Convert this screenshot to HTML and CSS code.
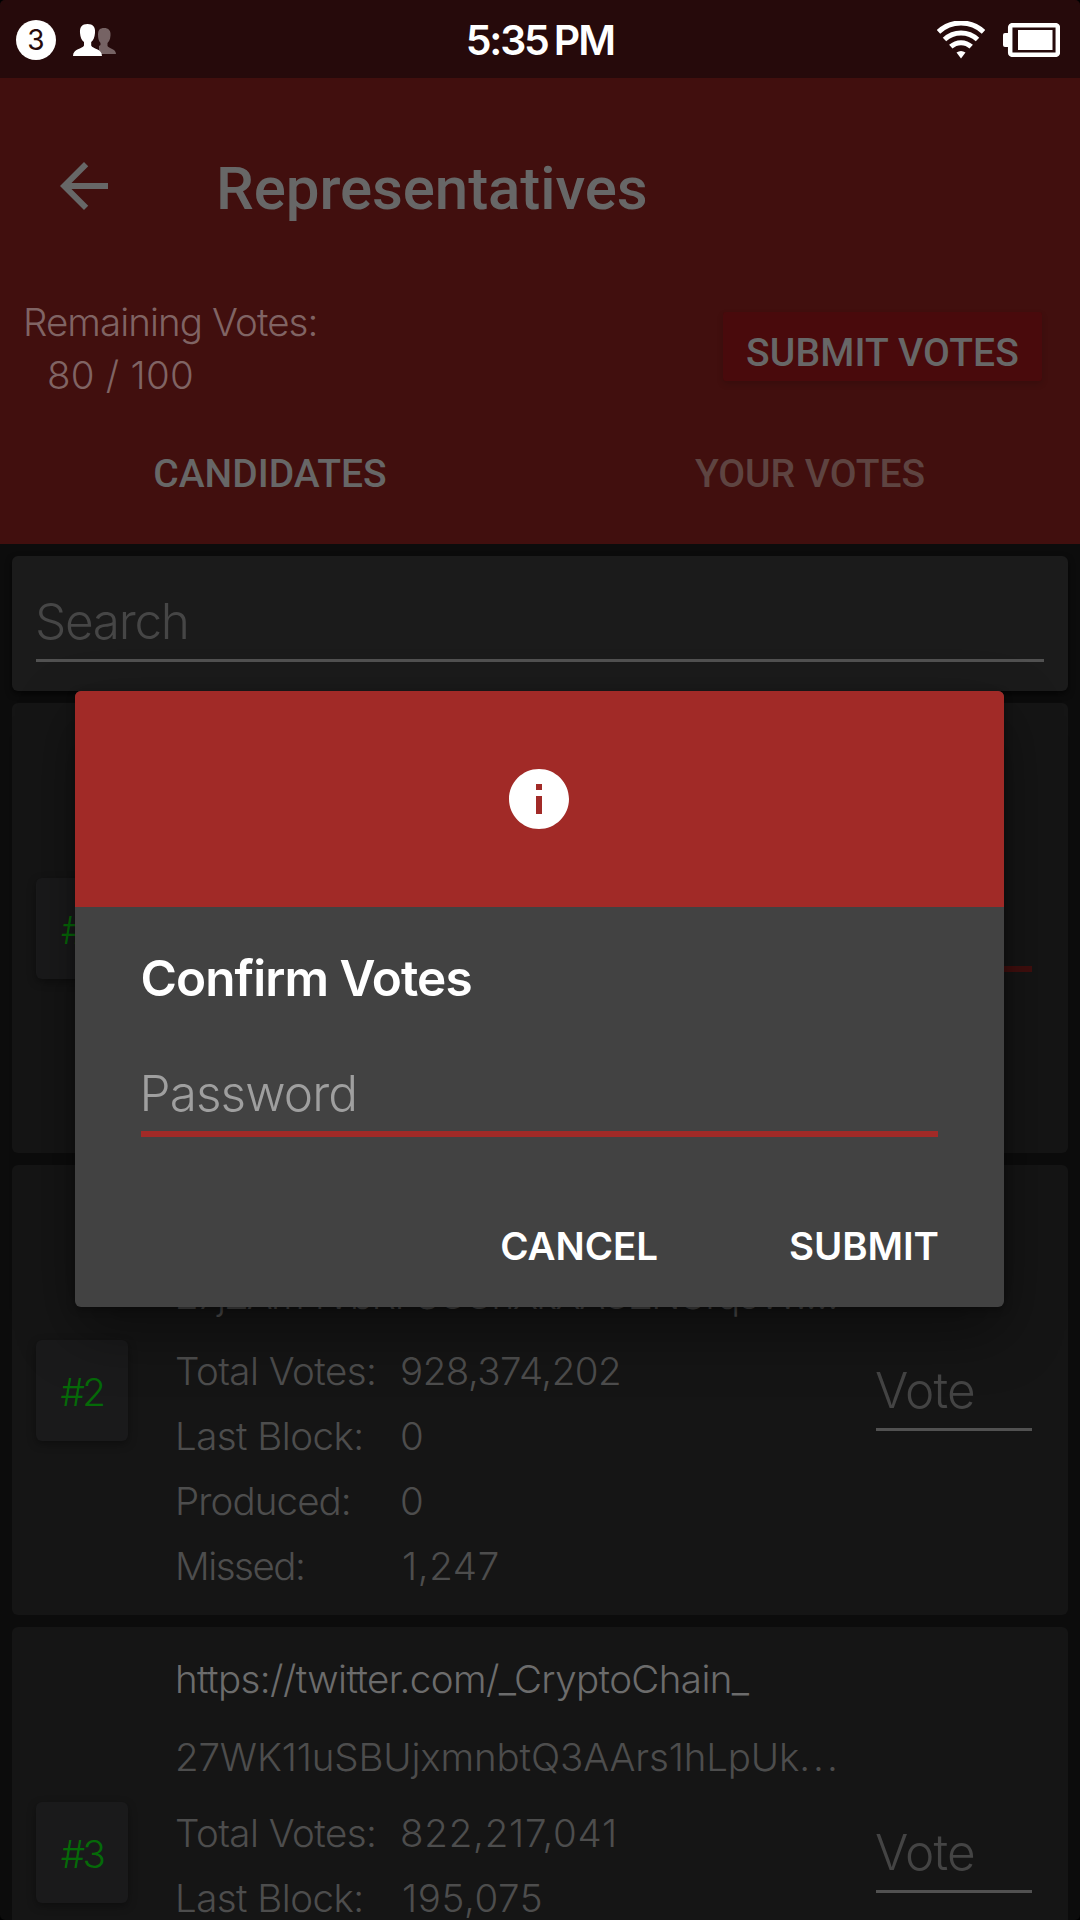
FILE: index.html
```html
<!DOCTYPE html>
<html lang="en">
<head>
<meta charset="utf-8">
<title>Representatives</title>
<link rel="stylesheet" href="styles.css">
</head>
<body>
<div class="screen">
  <div class="status">
    <div class="status-side">
      <span class="count">3</span>
      <svg class="people" width="44" height="32" viewBox="0 0 44 32">
        <path fill="#766364" d="M31 4c4.500 0 7 2.500 6.500 7.500C37.200 15.500 36 17.500 34.500 19v3c1 2.500 8.500 2.500 8.500 8H26V22l1.500-1v-2C25.500 17 25 14 25 10.500 25 6 27 4 31 4z"/>
        <path fill="#fff" d="M14.500 0c5.500 0 8 3 7.500 9-.4 4.500-1.500 7-3.800 9v3.500C19.500 25 29 24.500 29 32H0c0-7.500 9.500-7 11-10.500V18C8.500 16 7.400 13.500 7 9c-.5-6 2-9 7.500-9z"/>
      </svg>
    </div>
    <div class="clock"><span class="clock-time">5:35</span><span>PM</span></div>
    <div class="status-side status-right">
      <svg class="wifi" width="48" height="38" viewBox="0 0 48 38" fill="none" stroke="#fff" stroke-width="5">
        <path d="M1.500 10.800A33 33 0 0 1 46.500 10.800"/>
        <path d="M7.500 18.500A24 24 0 0 1 40.500 18.500"/>
        <path d="M13.800 25.700A15 15 0 0 1 34.200 25.700"/>
        <path d="M19.500 31.500Q24 28.500 28.500 31.500L24 37.500z" fill="#fff" stroke="none"/>
      </svg>
      <svg class="battery" width="57" height="34" viewBox="0 0 57 34">
        <rect x="0" y="10" width="8" height="14" rx="2" fill="#fff"/>
        <rect x="7.200" y="2.200" width="47.600" height="29.600" rx="2" fill="none" stroke="#fff" stroke-width="4.500"/>
        <rect x="15" y="7" width="34.500" height="20" fill="#fff"/>
      </svg>
    </div>
  </div>

  <header class="header">
    <div class="toolbar">
      <svg width="72" height="72" viewBox="0 0 24 24"><path fill="#676767" d="M20 11H7.830l5.590-5.590L12 4l-8 8 8 8 1.410-1.410L7.830 13H20v-2z"/></svg>
      <h1 class="title">Representatives</h1>
    </div>
    <div class="summary">
      <div class="remaining">
        <div class="remaining-label">Remaining Votes:</div>
        <div class="remaining-value">80 / 100</div>
      </div>
      <div class="submit-votes">SUBMIT VOTES</div>
    </div>
    <nav class="tabs">
      <div class="tab tab-active">CANDIDATES</div>
      <div class="tab">YOUR VOTES</div>
    </nav>
  </header>

  <main class="list">
    <div class="search"><div class="search-field">Search</div></div>

    <article class="card">
      <div class="rank rank-first">#1</div>
      <div class="info"></div>
      <div class="vote vote-focused"></div>
    </article>

    <article class="card">
      <div class="rank">#2</div>
      <div class="info">
        <div class="url"></div>
        <div class="address address-second">27jZAm4VbRFSCGhXkXACZNUrqJvw…</div>
        <div class="stats">
          <div>Total Votes:</div><div class="n-tight">928,374,202</div>
          <div>Last Block:</div><div>0</div>
          <div class="produced">Produced:</div><div>0</div>
          <div class="missed">Missed:</div><div class="n-one">1,247</div>
        </div>
      </div>
      <div class="vote">Vote</div>
    </article>

    <article class="card">
      <div class="rank">#3</div>
      <div class="info">
        <div class="url">https://twitter.com/_CryptoChain_</div>
        <div class="address">27WK11uSBUjxmnbtQ3AArs1hLpUk<span class="more">...</span></div>
        <div class="stats">
          <div>Total Votes:</div><div class="n-wide">822,217,041</div>
          <div>Last Block:</div><div class="n-one">195,075</div>
        </div>
      </div>
      <div class="vote">Vote</div>
    </article>
  </main>

  <section class="dialog">
    <div class="dialog-top">
      <svg width="72" height="72" viewBox="0 0 24 24"><path fill="#fff" d="M12 2C6.480 2 2 6.480 2 12s4.480 10 10 10 10-4.480 10-10S17.520 2 12 2zm1 15h-2v-6h2v6zm0-8h-2V7h2v2z"/></svg>
    </div>
    <div class="dialog-body">
      <h2 class="dialog-title">Confirm Votes</h2>
      <div class="password">Password</div>
      <div class="actions"><span>CANCEL</span><span>SUBMIT</span></div>
    </div>
  </section>
</div>
</body>
</html>
```
FILE: styles.css
```css
* { box-sizing: border-box; }

html { background: #000; }

body {
  margin: 0;
  font-family: Inter, "Liberation Sans", sans-serif;
  font-weight: 300;
  font-size: 38.5px;
  font-feature-settings: "calt" 0;
}

.screen {
  position: relative;
  width: 1080px;
  height: 1920px;
  overflow: hidden;
  border-radius: 5px;
  background: #0c0c0c;
}

svg { display: block; }

/* Status bar */
.status {
  display: grid;
  grid-template-columns: 1fr auto 1fr;
  height: 78px;
  background: #260a0b;
  color: #fff;
}
.status-side {
  display: flex;
  align-items: center;
  padding-left: 16px;
}
.status-right {
  justify-content: flex-end;
  padding: 0 20px 0 0;
}
.count {
  width: 40px;
  height: 40px;
  border-radius: 50%;
  background: #fff;
  color: #260a0b;
  font-size: 28px;
  font-weight: 400;
  line-height: 40px;
  text-align: center;
}
.people { margin-left: 17px; }
.wifi { margin-right: 18px; }
.clock {
  display: flex;
  gap: 6px;
  font-size: 41px;
  font-weight: 600;
  line-height: 80px;
  letter-spacing: -1.8px;
}
.clock-time { letter-spacing: -2.2px; }

/* App bar */
.header {
  height: 466px;
  padding-top: 24px;
  background: #410f0e;
  color: #676767;
  font-family: Roboto, sans-serif;
  font-weight: 500;
  font-size: 39px;
}
.toolbar {
  display: flex;
  align-items: center;
  gap: 96px;
  height: 168px;
  padding-left: 48px;
}
.title {
  margin: 5px 0 0;
  font-size: 60px;
  font-weight: 500;
  line-height: 80px;
  letter-spacing: -0.08px;
}
.summary {
  display: flex;
  justify-content: space-between;
  align-items: flex-start;
  height: 132px;
  padding: 26px 38px 0 23px;
}
.remaining {
  color: #806464;
  font-family: Inter, "Liberation Sans", sans-serif;
  font-size: 38.5px;
  font-weight: 300;
  line-height: 53px;
}
.remaining-label { letter-spacing: -0.93px; }
.remaining-value {
  padding-left: 24px;
  letter-spacing: 0.24px;
}
.submit-votes {
  width: 319px;
  height: 69px;
  margin-top: 16px;
  padding-top: 12px;
  border-radius: 3px;
  background: #490a0c;
  box-shadow: 0 3px 6px rgba(0, 0, 0, 0.15);
  line-height: 59px;
  text-align: center;
  letter-spacing: 0.15px;
}
.tabs {
  display: flex;
  height: 142px;
}
.tab {
  flex: 1;
  color: #5e4441;
  line-height: 145px;
  text-align: center;
}
.tab-active { color: #676767; }

/* Candidate list */
.list {
  display: flex;
  flex-direction: column;
  gap: 12px;
  padding: 12px;
}
.search {
  height: 135px;
  flex-shrink: 0;
  padding: 27px 24px 0;
  border-radius: 6px;
  background: #1b1b1b;
  box-shadow: 0 3px 6px rgba(0, 0, 0, 0.6);
}
.search-field {
  border-bottom: 3px solid #515151;
  color: #464646;
  font-size: 49.5px;
  line-height: 76px;
  letter-spacing: -1.3px;
  text-indent: -1px;
}
.card {
  display: flex;
  align-items: center;
  flex-shrink: 0;
  height: 450px;
  padding: 0 36px 0 24px;
  border-radius: 6px;
  background: #151515;
  color: #4d4d4d;
}
.rank {
  flex-shrink: 0;
  width: 92px;
  height: 101px;
  border-radius: 6px;
  background: #1a1a1b;
  box-shadow: 0 3px 8px rgba(0, 0, 0, 0.35);
  color: #056a08;
  line-height: 104px;
  text-align: center;
  letter-spacing: -2.5px;
}
.rank-first {
  padding-left: 25px;
  text-align: left;
}
.info {
  flex: 1;
  min-width: 0;
  height: 450px;
  margin-left: 47px;
  padding-top: 13px;
  white-space: nowrap;
}
.url {
  height: 78px;
  color: #6c6c6c;
  line-height: 78px;
  letter-spacing: -0.6px;
}
.address {
  height: 78px;
  margin-bottom: 5px;
  line-height: 78px;
  letter-spacing: -0.15px;
}
.more { letter-spacing: 3px; }
.address-second { letter-spacing: -1.6px; }
.stats {
  display: grid;
  grid-template-columns: 225px 1fr;
  grid-auto-rows: 65px;
  line-height: 65px;
  letter-spacing: -0.55px;
}
.produced { letter-spacing: -0.9px; }
.missed { letter-spacing: -1.5px; }
.n-tight { letter-spacing: -0.5px; }
.n-wide { letter-spacing: 0.75px; }
.n-one {
  padding-left: 2px;
  letter-spacing: 0.6px;
}
.vote {
  flex-shrink: 0;
  width: 156px;
  height: 82px;
  padding-top: 3px;
  border-bottom: 3px solid #515151;
  color: #444;
  font-size: 49.5px;
  line-height: 76px;
  letter-spacing: -0.84px;
  text-indent: -1px;
}
.vote-focused {
  height: 87px;
  border-bottom: 6px solid #410f0e;
}

/* Confirmation dialog, over the list */
.dialog {
  position: absolute;
  left: 75px;
  top: 691px;
  width: 929px;
  height: 616px;
  border-radius: 6px;
  background: #424242;
  box-shadow: 0 24px 60px rgba(0, 0, 0, 0.4), 0 2px 8px rgba(0, 0, 0, 0.3);
  color: #fff;
}
.dialog-top {
  display: flex;
  align-items: center;
  justify-content: center;
  height: 216px;
  padding-right: 1px;
  border-radius: 6px 6px 0 0;
  background: #a12a27;
}
.dialog-body { padding: 36px 66px 0 65.500px; }
.dialog-title {
  margin: 0;
  font-size: 49.5px;
  font-weight: 600;
  line-height: 70px;
  letter-spacing: -0.93px;
}
.password {
  margin-top: 43px;
  border-bottom: 6px solid #a12a27;
  color: #9f9f9f;
  font-size: 49.5px;
  line-height: 75px;
  letter-spacing: -0.9px;
  text-indent: -1px;
}
.actions {
  display: flex;
  justify-content: flex-end;
  gap: 131px;
  margin: 79px -1px 0 0;
  font-weight: 600;
  line-height: 60px;
  letter-spacing: -0.05px;
}
```
